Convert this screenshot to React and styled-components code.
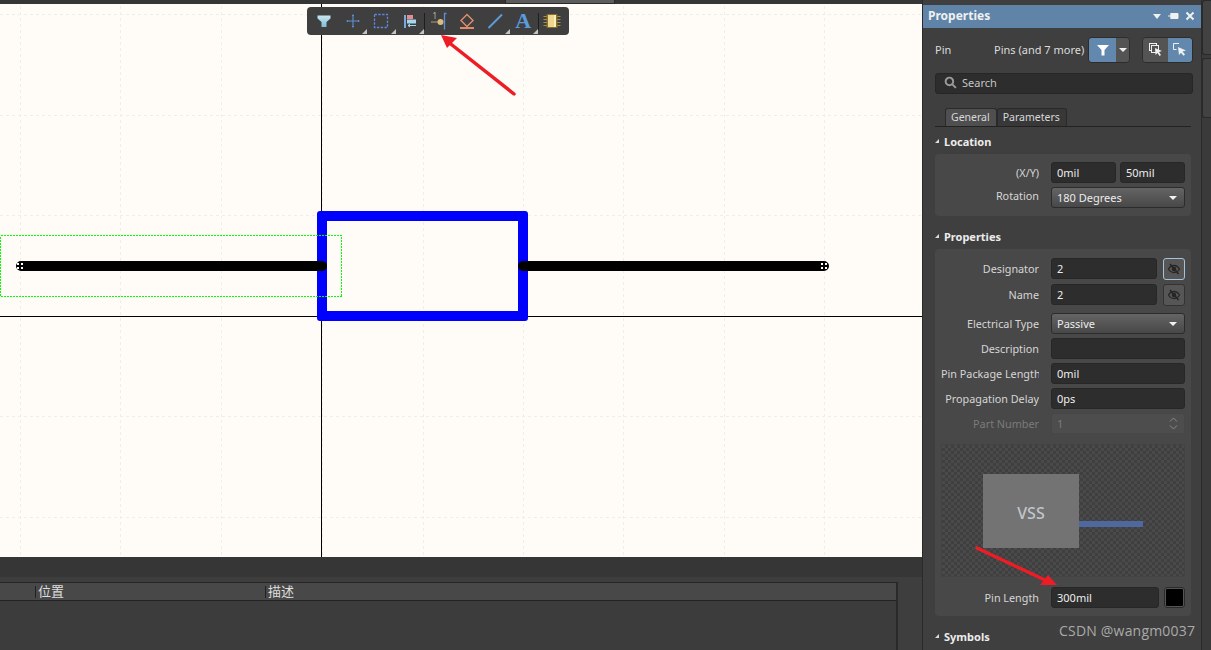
import React from 'react';
import styled, { createGlobalStyle } from 'styled-components';

const Global = createGlobalStyle`
  html, body { margin: 0; padding: 0; background: #3c3c3c; overflow: hidden; }
  * { box-sizing: border-box; }
`;

const Page = styled.div`
  position: relative;
  width: 1211px;
  height: 650px;
  overflow: hidden;
  display: flex;
  font-family: "Noto Sans", "Open Sans", sans-serif;
  font-size: 11px;
  color: #dcdcdc;
`;
const Workspace = styled.div`
  width: 922px;
  display: flex;
  flex-direction: column;
`;
const TabStrip = styled.div`
  height: 4px;
  background: #353535;
  padding-left: 505px;
`;
const ActiveDoc = styled.div`
  width: 110px;
  height: 4px;
  background: #5c5c5c;
  border: 1px solid #2a2a2a;
  border-top: none;
`;
const CanvasArea = styled.div`
  position: relative;
  height: 553px;
  background: #fffcf7;
`;
const CanvasDrawing = styled.svg`
  display: block;
`;
const Toolbar = styled.div`
  position: absolute;
  left: 307px;
  top: 3px;
  width: 262px;
  height: 28px;
  padding-left: 3px;
  display: flex;
  align-items: center;
  background: #3f3f3f;
  border-radius: 4px;
`;
const ToolButton = styled.div`
  position: relative;
  width: 28.5px;
  height: 28px;
  display: flex;
  align-items: center;
  justify-content: center;
  &::after {
    content: ${p => (p.$more ? '""' : 'none')};
    position: absolute;
    right: 0;
    bottom: 1px;
    border-style: solid;
    border-width: 0 0 5px 5px;
    border-color: transparent transparent #c4c4c4 transparent;
  }
`;
const ToolSep = styled.div`
  width: 1px;
  height: 17px;
  margin: 0 -1px 0 0;
  background: #1e1e1e;
`;
const TextTool = styled.span`
  font-family: "Liberation Serif", serif;
  font-weight: 700;
  font-size: 22px;
  line-height: 22px;
  margin-right: 1px;
  color: #5b9bdc;
`;

const BottomPanel = styled.div`
  flex: 1;
  display: flex;
  flex-direction: column;
  background: #3e3e3e;
`;
const BottomHandle = styled.div`
  height: 20px;
  background: #363636;
`;
const TableWrap = styled.div`
  flex: 1;
  margin-top: 5px;
  width: 898px;
  border-top: 1px solid #262626;
  border-right: 2px solid #2a2a2a;
  background: #3c3c3c;
`;
const TableHead = styled.div`
  height: 18px;
  display: flex;
  align-items: center;
  background: #484848;
  border-bottom: 1px solid #232323;
  padding-left: 35px;
`;
const HeadCell = styled.div`
  width: ${p => p.$w}px;
  height: 12px;
  border-left: 1px solid #222;
  padding: 0 0 2px 2px;
  display: flex;
  align-items: center;
  font-family: "Noto Sans CJK SC", sans-serif;
  font-size: 13px;
  color: #dedede;
`;

const Panel = styled.aside`
  width: 280px;
  border-left: 1px solid #2a2a2a;
  border-right: 1px solid #2a2a2a;
  background: #3f3f3f;
  padding-top: 5px;
  display: flex;
  flex-direction: column;
`;
const TitleBar = styled.div`
  height: 23px;
  background: #5f84a8;
  display: flex;
  align-items: center;
  justify-content: space-between;
  padding: 0 6px 2px 5px;
  font-size: 12px;
  font-weight: 700;
  color: #f0f0f0;
`;
const TitleIcons = styled.div`
  display: flex;
  align-items: center;
  gap: 6px;
`;
const PanelBody = styled.div`
  padding: 9px 8px 0 12px;
  display: flex;
  flex-direction: column;
`;
const SelectorRow = styled.div`
  height: 26px;
  display: flex;
  align-items: center;
`;
const SelectorLabel = styled.span`
  width: 59px;
  padding-bottom: 2px;
`;
const SelectorValue = styled.span`
  width: 94px;
  padding-bottom: 2px;
  white-space: nowrap;
`;
const ButtonGroup = styled.div`
  display: flex;
  flex: none;
  height: 26px;
  margin-left: ${p => p.$ml}px;
  border: 1px solid #2d2d2d;
  border-radius: 4px;
  overflow: hidden;
`;
const GroupButton = styled.div`
  width: ${p => p.$w}px;
  display: flex;
  align-items: center;
  justify-content: center;
  background: ${p => (p.$on ? '#6288ad' : '#545454')};
`;
const SearchBox = styled.div`
  height: 21px;
  margin-top: 10px;
  display: flex;
  align-items: center;
  gap: 5px;
  padding: 0 0 2px 8px;
  width: 258px;
  background: #2d2d2d;
  border: 1px solid #262626;
  border-radius: 3px;
  color: #c4c4c4;
`;
const Tabs = styled.div`
  margin-top: 14px;
  height: 19px;
  padding-left: 10px;
  display: flex;
  width: 256px;
  border-bottom: 1px solid #222;
`;
const Tab = styled.div`
  height: 18px;
  padding: 0 6px 1px 5px;
  display: flex;
  align-items: center;
  border: 1px solid #2a2a2a;
  border-bottom: none;
  border-radius: 3px 3px 0 0;
  background: ${p => (p.$active ? '#4f4f4f' : '#383838')};
  color: #d8d8d8;
  font-size: 10.5px;
`;
const SectionHead = styled.div`
  height: 18px;
  margin-top: ${p => p.$mt}px;
  padding-bottom: 2px;
  display: flex;
  align-items: center;
  gap: 5px;
  font-weight: 700;
  color: #ececec;
  &::before {
    content: "";
    border-style: solid;
    border-width: 0 0 4px 4px;
    border-color: transparent transparent #dcdcdc transparent;
  }
`;
const Section = styled.div`
  margin-top: 3px;
  width: 256px;
  padding: ${p => p.$pt}px 6px 8px;
  background: #484848;
  border-radius: 4px;
  display: flex;
  flex-direction: column;
`;
const Row = styled.div`
  display: grid;
  grid-template-columns: 98px 1fr;
  column-gap: 12px;
  align-items: center;
  height: 21px;
  margin-top: ${p => p.$mt ?? 4}px;
  &:first-child { margin-top: 0; }
`;
const Label = styled.div`
  display: block;
  text-align: right;
  overflow: hidden;
  white-space: nowrap;
  padding-bottom: ${p => (p.$raised ? '4px' : '0')};
  color: ${p => (p.$dim ? '#7b7b7b' : '#d6d6d6')};
  font-size: 10.8px;
`;
const Controls = styled.div`
  display: flex;
  gap: ${p => p.$gap ?? 4}px;
  height: 21px;
`;
const Field = styled.div`
  flex: 1;
  min-width: 0;
  height: 21px;
  display: flex;
  align-items: center;
  justify-content: space-between;
  padding: 0 5px;
  background: ${p => (p.$disabled ? '#4d4d4d' : '#2d2d2d')};
  border: 1px solid ${p => (p.$disabled ? '#474747' : '#272727')};
  border-radius: 3px;
  color: ${p => (p.$disabled ? '#7b7b7b' : '#eeeeee')};
`;
const Select = styled.div`
  flex: 1;
  height: 21px;
  display: flex;
  align-items: center;
  justify-content: space-between;
  padding: 0 5px;
  background: linear-gradient(#646464, #484848);
  border: 1px solid #2c2c2c;
  border-radius: 3px;
  color: #ececec;
  &::after {
    content: "";
    border-style: solid;
    border-width: 4px 4px 0 4px;
    border-color: #f2f2f2 transparent transparent transparent;
    margin-right: 2px;
  }
`;
const EyeButton = styled.div`
  width: 22px;
  height: 22px;
  flex: none;
  display: flex;
  align-items: center;
  justify-content: center;
  border: 1px solid ${p => (p.$focus ? '#a3c3dc' : '#333')};
  border-radius: 3px;
  background: #565656;
`;
const Spinner = styled.div`
  display: flex;
  flex-direction: column;
  gap: 3px;
  margin-right: 1px;
`;
const Preview = styled.div`
  margin-top: 10px;
  height: 133px;
  padding: 29px 0 0 41px;
  display: flex;
  align-items: flex-start;
  border: 1px solid #434343;
  background-color: #434343;
  background-image: conic-gradient(#3f3f3f 25%, #4a4a4a 0 50%, #3f3f3f 0 75%, #4a4a4a 0);
  background-size: 6px 6px;
`;
const PreviewBody = styled.div`
  width: 96px;
  height: 74px;
  padding-top: 3px;
  display: flex;
  align-items: center;
  justify-content: center;
  background: #737373;
  color: #bfc6cc;
  font-size: 16px;
  font-weight: 500;
`;
const PreviewPin = styled.div`
  width: 64px;
  height: 6px;
  margin-top: 47px;
  background: #4f689f;
`;
const Swatch = styled.div`
  width: 21px;
  height: 21px;
  flex: none;
  background: #000;
  border: 2px solid #555;
  outline: 1px solid #2a2a2a;
  outline-offset: -1px;
  border-radius: 3px;
`;
const SideRail = styled.div`
  width: 9px;
  background: #3a3a3a;
  display: flex;
  flex-direction: column;
  gap: 3px;
`;
const RailTab = styled.div`
  height: ${p => p.$h}px;
  background: #424242;
  border: 1px solid #2a2a2a;
  border-right: none;
  border-radius: 3px 0 0 3px;
`;
const Annotations = styled.svg`
  position: absolute;
  inset: 0;
  pointer-events: none;
`;
const Watermark = styled.div`
  position: absolute;
  left: 1059px;
  top: 621px;
  font-family: "Open Sans", sans-serif;
  font-size: 14px;
  letter-spacing: 0.2px;
  color: #aaaaaa;
`;

const FilterIcon = () => (
  <svg width="20" height="20" viewBox="0 0 20 20">
    <defs>
      <linearGradient id="fg" x1="0" y1="0" x2="0" y2="1">
        <stop offset="0" stopColor="#c9e6f2" />
        <stop offset="1" stopColor="#7fbcd6" />
      </linearGradient>
    </defs>
    <path d="M3.500 4.500h13v3l-4 3.500v5h-5v-5l-4-3.500z" fill="url(#fg)" />
  </svg>
);
const CrossIcon = () => (
  <svg width="20" height="20" viewBox="0 0 20 20" fill="none" stroke="#5d8fd6" strokeWidth="1.100">
    <path d="M10 3.500v13M3.500 10h13M9 4.500h2M9 15.500h2M4.500 9v2M15.500 9v2" />
  </svg>
);
const MarqueeIcon = () => (
  <svg width="20" height="20" viewBox="0 0 20 20" fill="none">
    <rect x="3.500" y="3.500" width="13" height="13" stroke="#5f86dc" strokeWidth="1.300" strokeDasharray="2.400 1.400" />
  </svg>
);
const AlignIcon = () => (
  <svg width="20" height="20" viewBox="0 0 20 20">
    <rect x="4" y="4" width="2" height="13" fill="#7aa8e2" />
    <rect x="7" y="4" width="6" height="4" fill="#e98a8f" />
    <rect x="7" y="8.500" width="9" height="4" fill="#a6d6ea" />
    <path d="M8 14.500h8M10 13l-2 1.500 2 1.500" fill="none" stroke="#a6d6ea" strokeWidth="1" />
  </svg>
);
const PinIcon = () => (
  <svg width="20" height="20" viewBox="0 0 20 20">
    <text x="4.500" y="8" fontSize="8" fontFamily="Noto Sans" fill="#b8b8b8">1</text>
    <path d="M3 11h7" stroke="#b5a071" strokeWidth="1" />
    <circle cx="12.500" cy="11" r="3" fill="#d9bc80" />
    <path d="M18.500 2.500h-2v16" fill="none" stroke="#5d8fd6" strokeWidth="1.300" />
  </svg>
);
const EraseIcon = () => (
  <svg width="20" height="20" viewBox="0 0 20 20">
    <path d="M10 3.500l6 6-6 6-6-6z" fill="none" stroke="#df8f6f" strokeWidth="1.400" />
    <rect x="3" y="16" width="14" height="2" fill="#df8a68" />
  </svg>
);
const LineIcon = () => (
  <svg width="20" height="20" viewBox="0 0 20 20">
    <path d="M3.500 17 17 3.500" stroke="#5c9ade" strokeWidth="2" />
  </svg>
);
const ChipIcon = () => (
  <svg width="20" height="20" viewBox="0 0 20 20">
    <path d="M1.500 5.500h17M1.500 8.500h17M1.500 11.500h17M1.500 14.500h17" stroke="#a78e45" strokeWidth="1" />
    <rect x="4.500" y="3" width="11" height="14" rx="1" fill="#8a6f2e" />
    <rect x="6" y="4" width="8" height="12" fill="#efd68f" />
    <rect x="12" y="4" width="2" height="12" fill="#fbeec2" />
  </svg>
);
const EyeOff = ({ color }) => (
  <svg width="14" height="14" viewBox="0 0 14 14" fill="none" stroke={color} strokeWidth="1.300">
    <path d="M1.500 7S3.500 3.500 7 3.500 12.500 7 12.500 7 10.500 10.500 7 10.500 1.500 7 1.500 7z" />
    <circle cx="7" cy="7" r="1.600" fill={color} />
    <path d="M3 2l8.500 10" strokeWidth="1.600" />
  </svg>
);
const SelectAllIcon = () => (
  <svg width="18" height="18" viewBox="0 0 18 18" fill="none" stroke="#f0f0f0" strokeWidth="1">
    <rect x="2.500" y="2.500" width="7" height="7" />
    <rect x="4.500" y="4.500" width="7" height="7" fill="#545454" />
    <path d="M8 7l7 3-3 1 2 3-1.500 1-2-3-2 2z" fill="#f0f0f0" stroke="none" />
  </svg>
);
const SelectOneIcon = () => (
  <svg width="18" height="18" viewBox="0 0 18 18" fill="none" stroke="#f0f0f0" strokeWidth="1">
    <path d="M8 2.500H2.500v6h3" />
    <path d="M7 6l8 3.500-3.500 1 2.500 3-1.500 1.200-2.500-3-2 2.300z" fill="#f0f0f0" stroke="none" />
  </svg>
);

const pinDots = (x, y) => [[0, 0], [4, 0], [0, 4], [4, 4]].map(([a, b]) => (
  <rect key={`${x}${a}${b}`} x={x + a} y={y + b} width="2" height="2" fill="#fff" />
));
const gridX = [20, 120, 221, 322, 423, 523, 623, 724, 824];
const gridY = [14, 115, 215, 316, 416, 517];

const Canvas = () => (
  <CanvasDrawing width="922" height="553" viewBox="0 4 922 553">
    <g stroke="#f1eee8" strokeWidth="1" strokeDasharray="3 3">
      {gridX.map(x => <line key={x} x1={x + 0.5} y1="0" x2={x + 0.5} y2="557" />)}
      {gridY.map(y => <line key={y} x1="0" y1={y + 0.5} x2="922" y2={y + 0.5} />)}
    </g>
    <path d="M321.500 0v557M0 316.500h922" stroke="#000" strokeWidth="1" />
    <path
      fillRule="evenodd"
      fill="#0000ff"
      d="M320 211h205a3 3 0 0 1 3 3v104a3 3 0 0 1-3 3H320a3 3 0 0 1-3-3V214a3 3 0 0 1 3-3zM327 221v90h191v-90z"
    />
    <path d="M21 266H322M523 266H824" stroke="#000" strokeWidth="10" strokeLinecap="round" />
    {pinDots(17, 263)}
    {pinDots(821, 263)}
    <rect x="0.500" y="235.500" width="341" height="61" fill="none" stroke="#00ff00" strokeWidth="1" strokeDasharray="2 1" shapeRendering="crispEdges" />
  </CanvasDrawing>
);

export default function App() {
  return (
    <Page>
      <Global />
      <Workspace>
        <TabStrip><ActiveDoc /></TabStrip>
        <CanvasArea>
          <Canvas />
          <Toolbar>
            <ToolButton><FilterIcon /></ToolButton>
            <ToolButton $more><CrossIcon /></ToolButton>
            <ToolButton $more><MarqueeIcon /></ToolButton>
            <ToolButton $more><AlignIcon /></ToolButton>
            <ToolSep />
            <ToolButton><PinIcon /></ToolButton>
            <ToolButton><EraseIcon /></ToolButton>
            <ToolButton $more><LineIcon /></ToolButton>
            <ToolButton $more><TextTool>A</TextTool></ToolButton>
            <ToolSep />
            <ToolButton><ChipIcon /></ToolButton>
          </Toolbar>
        </CanvasArea>
        <BottomPanel>
          <BottomHandle />
          <TableWrap>
            <TableHead>
              <HeadCell $w={230}>位置</HeadCell>
              <HeadCell $w={300}>描述</HeadCell>
            </TableHead>
          </TableWrap>
        </BottomPanel>
      </Workspace>
      <Panel>
        <TitleBar>
          Properties
          <TitleIcons>
            <svg width="10" height="10" viewBox="0 0 10 10"><path d="M1 3h8L5 8z" fill="#f0f0f0" /></svg>
            <svg width="11" height="10" viewBox="0 0 11 10"><path d="M0 5h3M3 2.500h7v5H3zM3 2v6" stroke="#f0f0f0" fill="#f0f0f0" strokeWidth="1" /></svg>
            <svg width="10" height="10" viewBox="0 0 10 10"><path d="M1.500 1.500l7 7M8.500 1.500l-7 7" stroke="#f0f0f0" strokeWidth="2" /></svg>
          </TitleIcons>
        </TitleBar>
        <PanelBody>
          <SelectorRow>
            <SelectorLabel>Pin</SelectorLabel>
            <SelectorValue>Pins (and 7 more)</SelectorValue>
            <ButtonGroup $ml={0}>
              <GroupButton $w={27} $on>
                <svg width="14" height="14" viewBox="0 0 14 14"><path d="M1 2h12L8.500 7v5.500h-3V7z" fill="#fff" /></svg>
              </GroupButton>
              <GroupButton $w={13}>
                <svg width="8" height="6" viewBox="0 0 8 6"><path d="M0 1h8L4 5z" fill="#f0f0f0" /></svg>
              </GroupButton>
            </ButtonGroup>
            <ButtonGroup $ml={12}>
              <GroupButton $w={25}><SelectAllIcon /></GroupButton>
              <GroupButton $w={24} $on><SelectOneIcon /></GroupButton>
            </ButtonGroup>
          </SelectorRow>
          <SearchBox>
            <svg width="13" height="13" viewBox="0 0 12 12" fill="none" stroke="#9a9a9a" strokeWidth="1.800">
              <circle cx="5" cy="5" r="3.500" />
              <path d="M7.500 7.500 11 11" />
            </svg>
            Search
          </SearchBox>
          <Tabs>
            <Tab $active>General</Tab>
            <Tab>Parameters</Tab>
          </Tabs>
          <SectionHead $mt={6}>Location</SectionHead>
          <Section $pt={8}>
            <Row>
              <Label>(X/Y)</Label>
              <Controls>
                <Field>0mil</Field>
                <Field>50mil</Field>
              </Controls>
            </Row>
            <Row>
              <Label $raised>Rotation</Label>
              <Controls><Select>180 Degrees</Select></Controls>
            </Row>
          </Section>
          <SectionHead $mt={12}>Properties</SectionHead>
          <Section $pt={9}>
            <Row>
              <Label>Designator</Label>
              <Controls $gap={6}>
                <Field>2</Field>
                <EyeButton $focus><EyeOff color="#262626" /></EyeButton>
              </Controls>
            </Row>
            <Row $mt={5}>
              <Label>Name</Label>
              <Controls $gap={6}>
                <Field>2</Field>
                <EyeButton><EyeOff color="#262626" /></EyeButton>
              </Controls>
            </Row>
            <Row $mt={8}>
              <Label>Electrical Type</Label>
              <Controls><Select>Passive</Select></Controls>
            </Row>
            <Row>
              <Label>Description</Label>
              <Controls><Field /></Controls>
            </Row>
            <Row>
              <Label>Pin Package Length</Label>
              <Controls><Field>0mil</Field></Controls>
            </Row>
            <Row>
              <Label>Propagation Delay</Label>
              <Controls><Field>0ps</Field></Controls>
            </Row>
            <Row>
              <Label $dim>Part Number</Label>
              <Controls>
                <Field $disabled>
                  1
                  <Spinner>
                    <svg width="9" height="5" viewBox="0 0 9 5" fill="none" stroke="#8a8a8a"><path d="M1 4.500 4.500 1 8 4.500" /></svg>
                    <svg width="9" height="5" viewBox="0 0 9 5" fill="none" stroke="#8a8a8a"><path d="M1 .5 4.500 4 8 .5" /></svg>
                  </Spinner>
                </Field>
              </Controls>
            </Row>
            <Preview>
              <PreviewBody>VSS</PreviewBody>
              <PreviewPin />
            </Preview>
            <Row $mt={10}>
              <Label>Pin Length</Label>
              <Controls $gap={5}>
                <Field>300mil</Field>
                <Swatch />
              </Controls>
            </Row>
          </Section>
          <SectionHead $mt={12}>Symbols</SectionHead>
        </PanelBody>
      </Panel>
      <SideRail>
        <RailTab $h={55} />
        <RailTab $h={60} />
      </SideRail>
      <Annotations width="1211" height="650" viewBox="0 0 1211 650">
        <path d="M514 94 447 41" stroke="#ee1c25" strokeWidth="3.500" strokeLinecap="round" />
        <path d="M441 35 457 38 447 48z" fill="#ee1c25" />
        <path d="M977 548 1047 581" stroke="#ee1c25" strokeWidth="3.500" strokeLinecap="round" />
        <path d="M1057 585 1040 585 1048 575z" fill="#ee1c25" />
      </Annotations>
      <Watermark>CSDN @wangm0037</Watermark>
    </Page>
  );
}
